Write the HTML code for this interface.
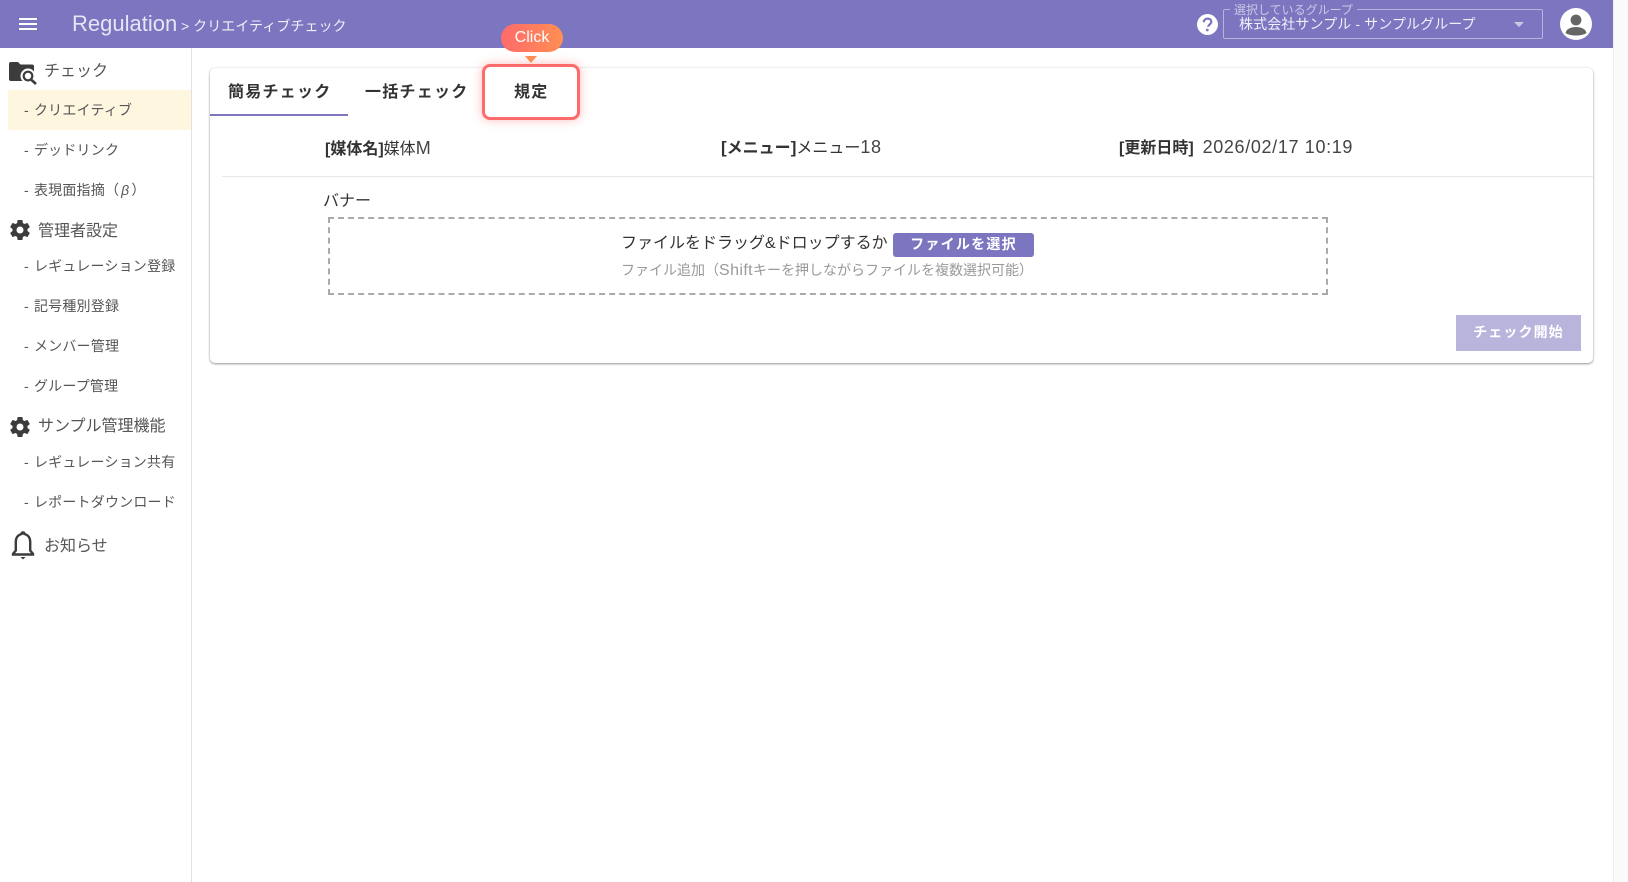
<!DOCTYPE html>
<html lang="ja"><head><meta charset="utf-8"><title>Regulation</title>
<style>
html,body{margin:0;padding:0;width:1628px;height:882px;overflow:hidden;background:#fff;}
body{font-family:"Liberation Sans","Noto Sans CJK JP",sans-serif;color:#333;position:relative;}
.a{position:absolute;white-space:nowrap;line-height:1;}
.nav{color:#555;font-size:14px;letter-spacing:.2px;word-spacing:1px;left:24px;}
.main{color:#555;font-size:16px;letter-spacing:0;}
.l{font-size:18px;letter-spacing:.65px;font-weight:400;color:#444;}
.br{font-size:17px;}
svg{position:absolute;display:block;}
</style></head><body>
<div class="a" style="left:1613px;top:0;width:15px;height:882px;background:#fafafa;border-left:1px solid #eee;box-sizing:border-box"></div>
<div class="a" style="left:0;top:0;width:1613px;height:48px;background:#7b76bf"></div>
<svg style="left:19px;top:18px" width="18" height="12" viewBox="0 0 18 12"><path d="M0 1h18M0 6h18M0 11h18" stroke="#fff" stroke-width="2"/></svg>
<div class="a" style="left:72px;top:12px;font-size:22px;color:#e6e4f5;line-height:24px">Regulation</div>
<div class="a" style="left:181px;top:18px;font-size:14px;color:#f0effa;letter-spacing:.05px;line-height:16px">&gt; クリエイティブチェック</div>
<svg style="left:1197px;top:14px" width="21" height="21" viewBox="0 0 21 21"><circle cx="10.5" cy="10.5" r="10.5" fill="#fff"/><path d="M6.8 8.2c0-2.2 1.7-3.6 3.8-3.6s3.7 1.3 3.7 3.2c0 2.6-3 2.6-3 5" fill="none" stroke="#7b76bf" stroke-width="2.2"/><circle cx="10.3" cy="16" r="1.4" fill="#7b76bf"/></svg>
<div class="a" style="left:1223px;top:9px;width:320px;height:30px;border:1px solid rgba(255,255,255,.45);box-sizing:border-box;border-radius:2px"></div>
<div class="a" style="left:1230px;top:4px;padding:0 4px;height:12px;background:#7b76bf;font-size:12px;color:rgba(255,255,255,.6);line-height:13px">選択しているグループ</div>
<div class="a" style="left:1239px;top:16px;font-size:14px;color:#f0effa;letter-spacing:.1px;line-height:17px">株式会社サンプル - サンプルグループ</div>
<svg style="left:1514px;top:22px" width="10" height="5" viewBox="0 0 10 5"><path d="M0 0h10L5 5z" fill="rgba(255,255,255,.6)"/></svg>
<svg style="left:1560px;top:8px" width="32" height="32" viewBox="0 0 32 32"><circle cx="16" cy="16" r="16" fill="#fff"/><circle cx="16" cy="12" r="5.4" fill="#666"/><path d="M5.5 25c1-4.5 6-6 10.500-6s9.500 1.500 10.500 6c-2.500 1.700-6 2.500-10.500 2.500s-8-.8-10.500-2.500z" fill="#666"/></svg>

<div class="a" style="left:191px;top:48px;width:1px;height:834px;background:#e2e2e2"></div>
<svg style="left:9px;top:61px" width="29" height="25" viewBox="0 0 29 25"><path d="M0 3a2 2 0 0 1 2-2h7l2.500 2.500H23a2 2 0 0 1 2 2V18a2 2 0 0 1-2 2H2a2 2 0 0 1-2-2z" fill="#3c3c3c"/><circle cx="19" cy="15" r="7.500" fill="#fff"/><circle cx="19" cy="15" r="4.300" fill="none" stroke="#3c3c3c" stroke-width="2.200"/><path d="M22 18.500l5 4.500" stroke="#3c3c3c" stroke-width="2.600"/></svg>
<div class="a main" style="left:44px;top:64px">チェック</div>
<div class="a" style="left:8px;top:90px;width:183px;height:40px;background:#fff6e0"></div>
<div class="a nav" style="top:103px">- クリエイティブ</div>
<div class="a nav" style="top:143px">- デッドリンク</div>
<div class="a nav" style="top:183px">- 表現面指摘（<i style="margin:0 2px">β</i>）</div>
<svg style="left:8px;top:218px" width="24" height="24" viewBox="0 0 24 24"><path fill="#3c3c3c" d="M19.430 12.980c.04-.32.07-.64.07-.98s-.03-.66-.07-.98l2.110-1.650c.19-.15.24-.42.120-.64l-2-3.460c-.12-.22-.39-.3-.61-.22l-2.490 1c-.52-.4-1.080-.73-1.690-.98l-.38-2.650A.49.490 0 0 0 14 2h-4c-.25 0-.46.180-.49.420l-.38 2.650c-.61.250-1.170.590-1.690.980l-2.490-1c-.23-.09-.49 0-.61.220l-2 3.460c-.13.220-.07.490.12.640l2.110 1.650c-.04.320-.07.650-.07.980s.03.660.07.980l-2.110 1.650c-.19.150-.24.420-.12.640l2 3.460c.12.220.39.300.61.220l2.490-1c.52.400 1.080.730 1.690.980l.38 2.650c.03.240.24.420.49.420h4c.25 0 .46-.18.49-.42l.38-2.650c.61-.25 1.170-.59 1.690-.98l2.490 1c.23.090.49 0 .61-.22l2-3.460c.12-.22.07-.49-.12-.64l-2.110-1.650zM12 15.500a3.500 3.500 0 1 1 0-7 3.500 3.500 0 0 1 0 7z"/></svg>
<div class="a main" style="left:38px;top:224px">管理者設定</div>
<div class="a nav" style="top:259px">- レギュレーション登録</div>
<div class="a nav" style="top:299px">- 記号種別登録</div>
<div class="a nav" style="top:339px">- メンバー管理</div>
<div class="a nav" style="top:379px">- グループ管理</div>
<svg style="left:8px;top:415px" width="24" height="24" viewBox="0 0 24 24"><path fill="#3c3c3c" d="M19.430 12.980c.04-.32.07-.64.07-.98s-.03-.66-.07-.98l2.110-1.650c.19-.15.24-.42.120-.64l-2-3.460c-.12-.22-.39-.3-.61-.22l-2.490 1c-.52-.4-1.080-.73-1.690-.98l-.38-2.650A.49.490 0 0 0 14 2h-4c-.25 0-.46.180-.49.420l-.38 2.650c-.61.250-1.170.590-1.690.980l-2.490-1c-.23-.09-.49 0-.61.220l-2 3.460c-.13.220-.07.490.12.640l2.110 1.650c-.04.320-.07.650-.07.980s.03.660.07.980l-2.110 1.650c-.19.150-.24.420-.12.640l2 3.460c.12.220.39.300.61.220l2.490-1c.52.400 1.080.730 1.690.980l.38 2.650c.03.240.24.420.49.420h4c.25 0 .46-.18.49-.42l.38-2.650c.61-.25 1.170-.59 1.690-.98l2.490 1c.23.090.49 0 .61-.22l2-3.460c.12-.22.07-.49-.12-.64l-2.110-1.650zM12 15.500a3.500 3.500 0 1 1 0-7 3.500 3.500 0 0 1 0 7z"/></svg>
<div class="a main" style="left:38px;top:419px">サンプル管理機能</div>
<div class="a nav" style="top:455px">- レギュレーション共有</div>
<div class="a nav" style="top:495px">- レポートダウンロード</div>
<svg style="left:11px;top:531px" width="24" height="29" viewBox="0 0 24 29"><path d="M12 1.500c-.9 0-1.400.6-1.400 1.500C6.700 3.900 4.800 7 4.800 11v8.500L2 22.800v.7h20v-.7l-2.800-3.300V11c0-4-1.900-7.100-5.800-8 0-.9-.5-1.500-1.400-1.500z" fill="none" stroke="#3c3c3c" stroke-width="2.400"/><path d="M9.500 26h5l-2.500 2.500z" fill="#3c3c3c"/></svg>
<div class="a main" style="left:44px;top:539px">お知らせ</div>

<div class="a" style="left:210px;top:68px;width:1383px;height:295px;background:#fff;border-radius:5px;box-shadow:0 1px 2px rgba(0,0,0,.4),0 0 2px rgba(0,0,0,.08)"></div>
<div class="a" style="left:210px;top:114px;width:138px;height:2px;background:#7b76bf"></div>
<div class="a" style="left:228px;top:85px;font-size:16px;font-weight:700;letter-spacing:1.250px;color:#333">簡易チェック</div>
<div class="a" style="left:365px;top:85px;font-size:16px;font-weight:700;letter-spacing:1.250px;color:#333">一括チェック</div>
<div class="a" style="left:482px;top:64px;width:98px;height:56px;box-sizing:border-box;border:3px solid #ff6b6b;border-radius:8px;background:#fff;box-shadow:0 0 10px rgba(255,107,107,.45)"></div>
<div class="a" style="left:514px;top:85px;font-size:16px;font-weight:700;letter-spacing:1.250px;color:#333">規定</div>
<div class="a" style="left:501px;top:24px;width:62px;height:28px;border-radius:14px;background:linear-gradient(90deg,#ff6b6b,#ff8e53);color:#fff;font-size:16px;line-height:27px;text-align:center">Click</div>
<svg style="left:525px;top:56px" width="12" height="7" viewBox="0 0 12 7"><path d="M0 0h12L6 7z" fill="#ff8e53"/></svg>

<div class="a" style="left:325px;top:140px;font-size:16px;line-height:17px"><b>[媒体名]</b>媒体<span class="l" style="letter-spacing:0">M</span></div>
<div class="a" style="left:721px;top:139px;font-size:16px;line-height:17px"><b><span class="br">[</span>メニュー<span class="br">]</span></b>メニュー<span class="l">18</span></div>
<div class="a" style="left:1119px;top:139px;font-size:16px;line-height:17px"><b>[更新日時]</b>&nbsp; <span class="l">2026/02/17 10:19</span></div>
<div class="a" style="left:222px;top:176px;width:1371px;height:1px;background:#e8e8e8"></div>
<div class="a" style="left:323px;top:193px;font-size:16px;line-height:17px">バナー</div>
<div class="a" style="left:328px;top:217px;width:1000px;height:78px;box-sizing:border-box;border:2px dashed #aaa"></div>
<div class="a" style="left:621px;top:235px;font-size:16px;line-height:17px">ファイルをドラッグ&amp;ドロップするか</div>
<div class="a" style="left:893px;top:233px;width:141px;height:24px;background:#7b76bf;border-radius:3px;color:#fff;font-size:14px;font-weight:700;letter-spacing:1.250px;line-height:22px;text-align:center">ファイルを選択</div>
<div class="a" style="left:621px;top:262px;font-size:14px;color:#999;line-height:16px">ファイル追加（<span style="font-size:16px;letter-spacing:.4px">Shift</span>キーを押しながらファイルを複数選択可能）</div>
<div class="a" style="left:1456px;top:315px;width:125px;height:36px;background:#b8b4dc;color:#fff;font-size:14px;font-weight:700;letter-spacing:1.100px;line-height:34px;text-align:center">チェック開始</div>
</body></html>
